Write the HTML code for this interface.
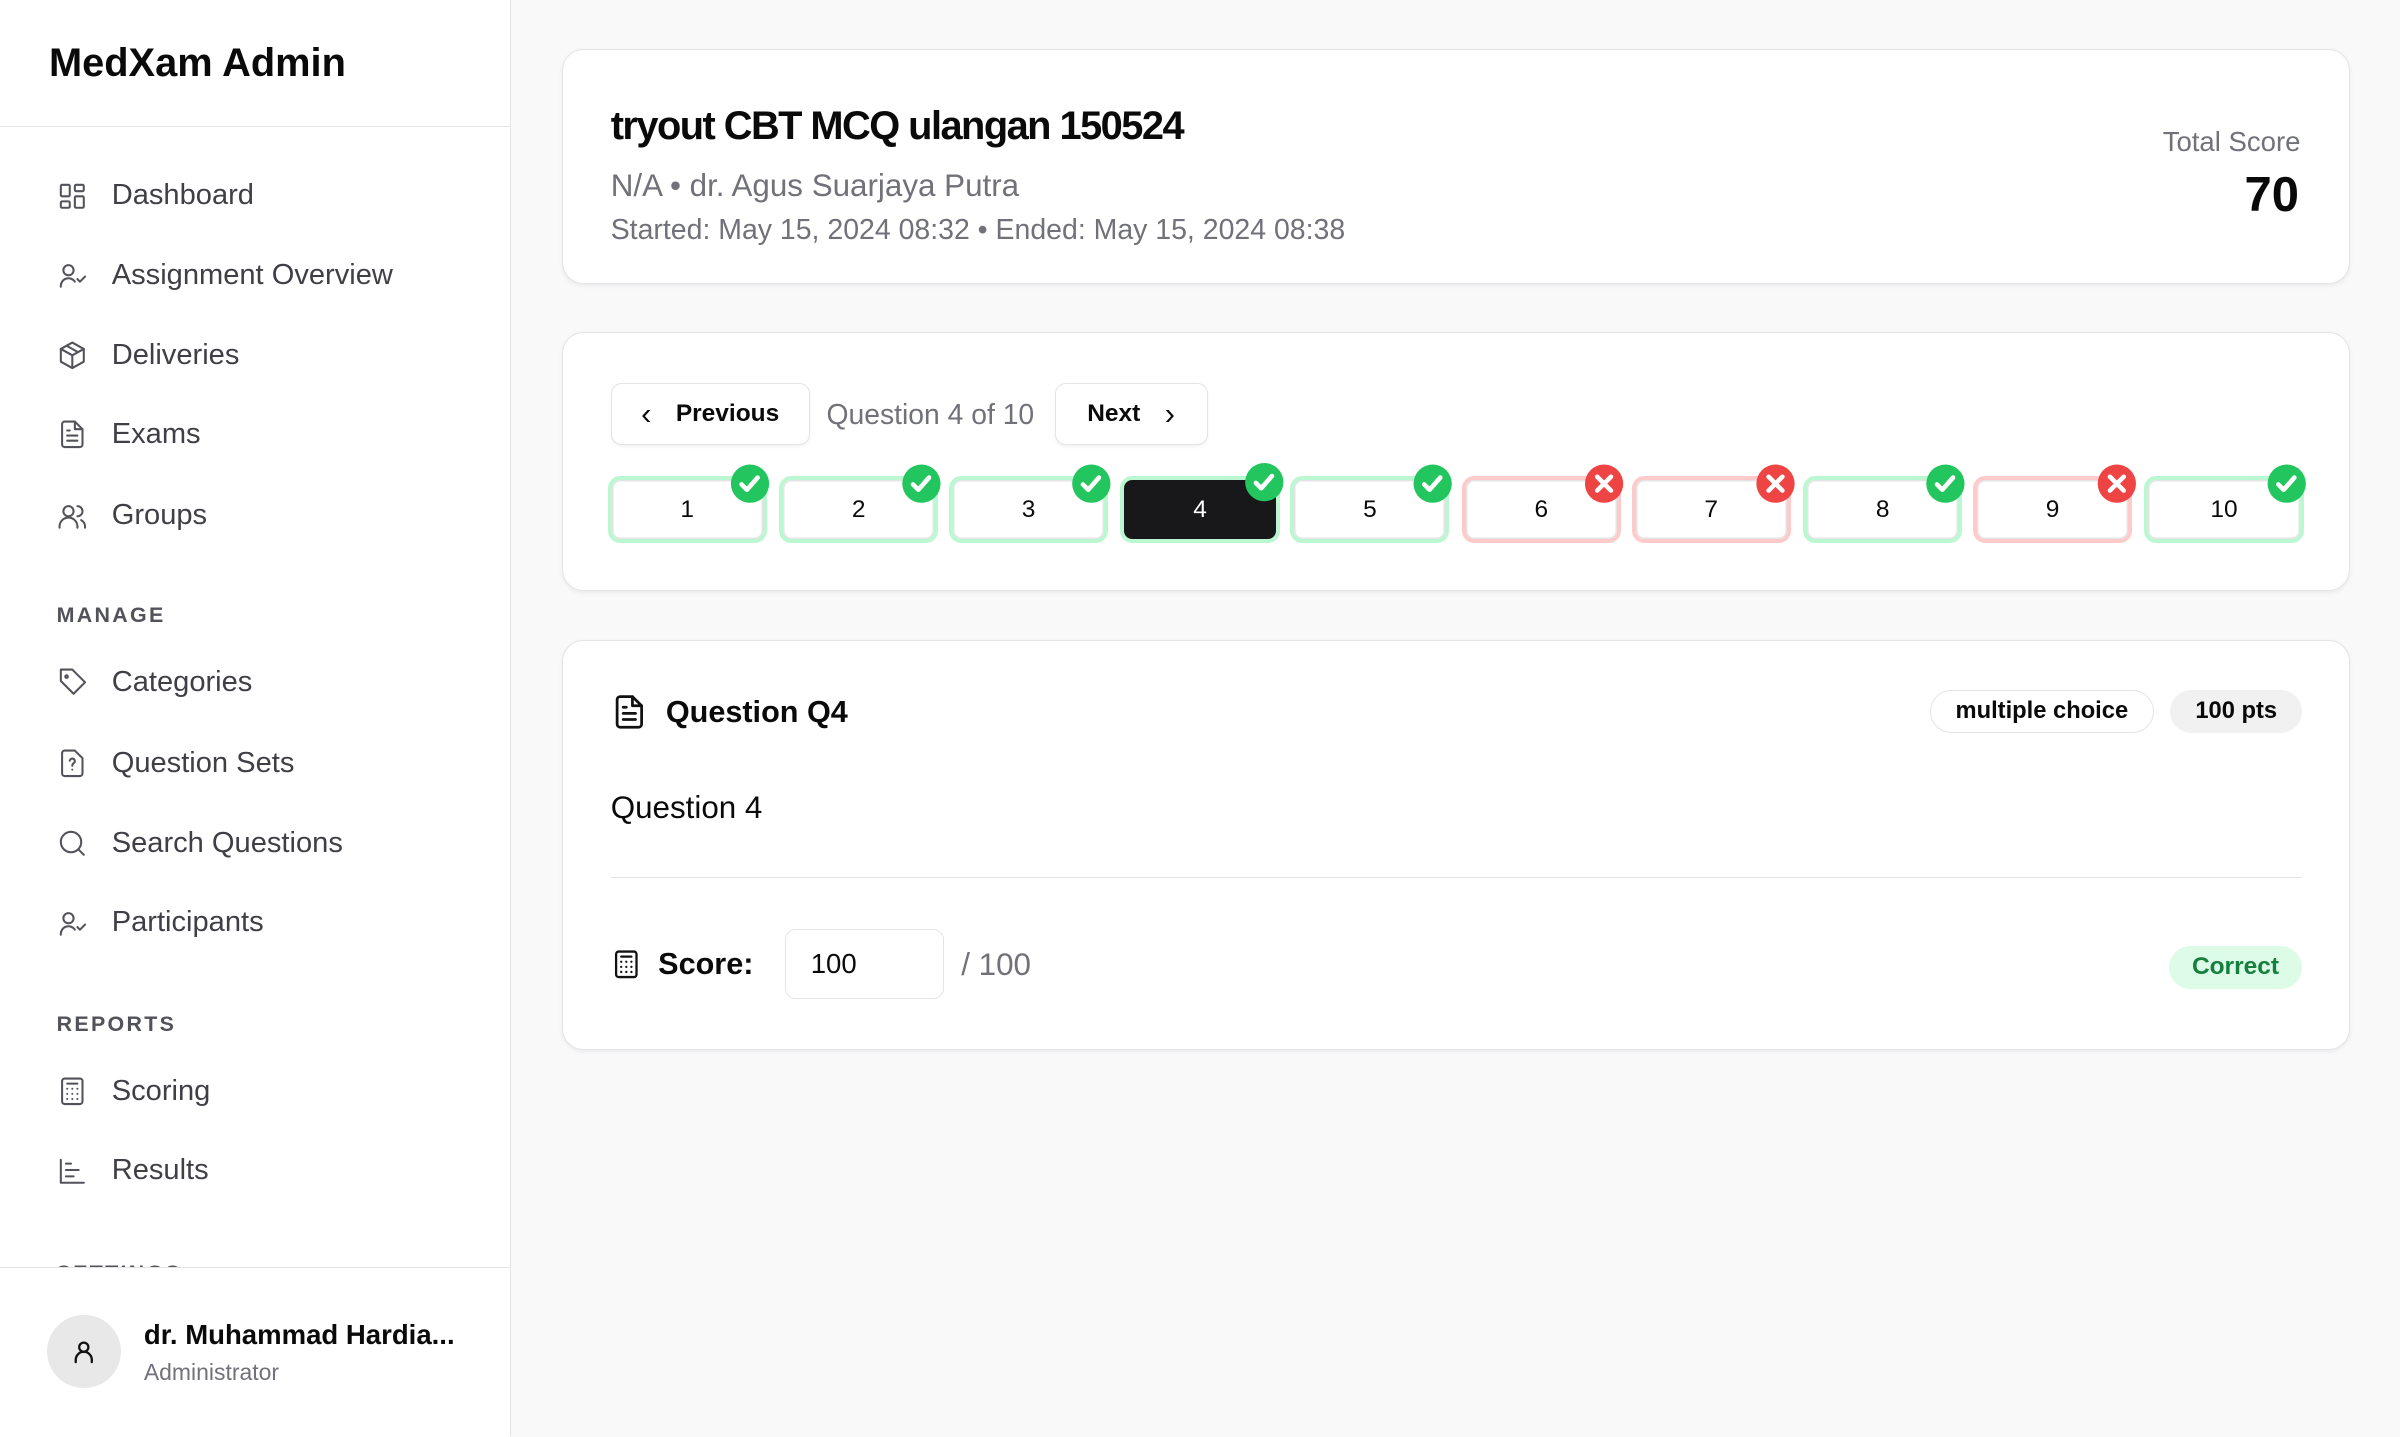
<!DOCTYPE html>
<html><head><meta charset="utf-8"><style>
html,body{margin:0;padding:0}
body{width:1568px;height:938px;zoom:1.530612;background:#f9f9fa;font-family:"Liberation Sans",sans-serif;color:#0a0a0a;position:relative;overflow:hidden}
.a{position:absolute}
.side{left:0;top:0;width:333px;height:938px;background:#fff;border-right:1px solid #e4e4e7}
.nav{left:37px;display:flex;align-items:center;font-size:19px;color:#3f3f46;height:24px;margin-top:-12px}
.nav svg{width:20px;height:20px;margin-right:16px;stroke:#52525b;fill:none;stroke-width:1.6;stroke-linecap:round;stroke-linejoin:round}
.sec{left:37px;font-size:14px;letter-spacing:1.5px;color:#52525b;font-weight:bold;margin-top:-8px}
.card{left:367px;width:1167px;background:#fff;border:1px solid #e4e4e7;border-radius:14px;box-shadow:0 1px 3px rgba(0,0,0,.06)}
.btn{border:1px solid #e4e4e7;border-radius:7px;background:#fff;display:flex;align-items:center;justify-content:center;font-size:16px;font-weight:bold;box-sizing:border-box;box-shadow:0 1px 2px rgba(0,0,0,.05)}
.t{top:311px;width:104px;height:44px;border:3px solid #bbf7d0;border-radius:8px;box-sizing:border-box;display:flex;align-items:center;justify-content:center;font-size:16px;background:#fff;box-shadow:inset 0 0 0 1px #e4e4e7}
.t.r{border-color:#fecaca}
</style></head><body>
<div class="a side"></div>
<div class="a" style="left:32px;top:27px;font-size:26px;font-weight:bold">MedXam Admin</div>
<div class="a" style="left:0;top:82px;width:333px;border-top:1px solid #e4e4e7"></div>

<div class="a nav" style="top:128px"><svg viewBox="0 0 24 24"><rect x="3" y="3" width="7" height="9" rx="1"/><rect x="14" y="3" width="7" height="5" rx="1"/><rect x="14" y="12" width="7" height="9" rx="1"/><rect x="3" y="16" width="7" height="5" rx="1"/></svg>Dashboard</div>
<div class="a nav" style="top:180px"><svg viewBox="0 0 24 24"><circle cx="9" cy="8" r="4"/><path d="M3 21v-1a6 6 0 0 1 11-3"/><path d="M16 15l2 2 4-4"/></svg>Assignment Overview</div>
<div class="a nav" style="top:232px"><svg viewBox="0 0 24 24"><path d="M12 2l9 5v10l-9 5-9-5V7z"/><path d="M3 7l9 5 9-5M12 12v10M7.5 4.5l9 5"/></svg>Deliveries</div>
<div class="a nav" style="top:284px"><svg viewBox="0 0 24 24"><path d="M14 2H6a2 2 0 0 0-2 2v16a2 2 0 0 0 2 2h12a2 2 0 0 0 2-2V8z"/><path d="M14 2v6h6M8 13h8M8 17h8M8 9h2"/></svg>Exams</div>
<div class="a nav" style="top:337px"><svg viewBox="0 0 24 24"><circle cx="9" cy="8" r="4"/><path d="M2 21v-1a7 7 0 0 1 14 0v1M16 4a4 4 0 0 1 0 8M19 15a6 6 0 0 1 3 5v1"/></svg>Groups</div>
<div class="a sec" style="top:402px">MANAGE</div>
<div class="a nav" style="top:446px"><svg viewBox="0 0 24 24"><path d="M12 2H3v9l10 10 9-9z"/><circle cx="7.5" cy="7.5" r="1"/></svg>Categories</div>
<div class="a nav" style="top:499px"><svg viewBox="0 0 24 24"><path d="M14 2H6a2 2 0 0 0-2 2v16a2 2 0 0 0 2 2h12a2 2 0 0 0 2-2V8z"/><path d="M10 10a2 2 0 1 1 3 2c-1 .5-1 1-1 2M12 17h0"/></svg>Question Sets</div>
<div class="a nav" style="top:551px"><svg viewBox="0 0 24 24"><circle cx="11" cy="11" r="8"/><path d="M21 21l-4.3-4.3"/></svg>Search Questions</div>
<div class="a nav" style="top:603px"><svg viewBox="0 0 24 24"><circle cx="9" cy="8" r="4"/><path d="M3 21v-1a6 6 0 0 1 11-3"/><path d="M16 15l2 2 4-4"/></svg>Participants</div>
<div class="a sec" style="top:669px">REPORTS</div>
<div class="a nav" style="top:713px"><svg viewBox="0 0 24 24"><rect x="4" y="2" width="16" height="20" rx="2"/><path d="M8 6h8M8 10h0M12 10h0M16 10h0M8 14h0M12 14h0M16 14h0M8 18h0M12 18h0M16 18h0"/></svg>Scoring</div>
<div class="a nav" style="top:765px"><svg viewBox="0 0 24 24"><path d="M3 3v18h18M7 16h6M7 11h10M7 6h4"/></svg>Results</div>
<div class="a sec" style="top:832px">SETTINGS</div>
<div class="a" style="left:0;top:828px;width:333px;height:110px;background:#fff;border-top:1px solid #e4e4e7"></div>
<div class="a" style="left:31px;top:859px;width:48px;height:48px;border-radius:50%;background:#e8e8e8;display:flex;align-items:center;justify-content:center"><svg width="18" height="18" viewBox="0 0 24 24" fill="none" stroke="#111" stroke-width="2" stroke-linecap="round"><circle cx="12" cy="8" r="4"/><path d="M5 21v-2a5 5 0 0 1 14 0v2"/></svg></div>
<div class="a" style="left:94px;top:862px;font-size:18px;font-weight:bold">dr. Muhammad Hardia...</div>
<div class="a" style="left:94px;top:888px;font-size:15px;color:#71717a">Administrator</div>

<div class="a card" style="top:32px;height:152px"></div>
<div class="a" style="left:399px;top:68px;font-size:26px;font-weight:bold;letter-spacing:-1px">tryout CBT MCQ ulangan 150524</div>
<div class="a" style="left:399px;top:110px;font-size:20.5px;color:#71717a">N/A • dr. Agus Suarjaya Putra</div>
<div class="a" style="left:399px;top:140px;font-size:18.6px;color:#71717a">Started: May 15, 2024 08:32 • Ended: May 15, 2024 08:38</div>
<div class="a" style="right:65px;top:82px;font-size:18px;color:#71717a">Total Score</div>
<div class="a" style="right:66px;top:109px;font-size:32px;font-weight:bold">70</div>

<div class="a card" style="top:217px;height:168px"></div>
<div class="a btn" style="left:399px;top:250px;width:130px;height:41px"><span style="margin-right:16px;font-size:20px;font-weight:normal">‹</span>Previous</div>
<div class="a" style="left:540px;top:260px;font-size:18.5px;color:#71717a">Question 4 of 10</div>
<div class="a btn" style="left:689px;top:250px;width:100px;height:41px">Next<span style="margin-left:16px;font-size:20px;font-weight:normal">›</span></div>

<div class="a t" style="left:397px">1</div>
<div class="a t" style="left:509px">2</div>
<div class="a t" style="left:620px">3</div>
<div class="a t" style="left:732px;background:#18181b;color:#fff;border-color:#bbf7d0;box-shadow:none">4</div>
<div class="a t" style="left:843px">5</div>
<div class="a t r" style="left:955px">6</div>
<div class="a t r" style="left:1066px">7</div>
<div class="a t" style="left:1178px">8</div>
<div class="a t r" style="left:1289px">9</div>
<div class="a t" style="left:1401px">10</div>
<svg class="a" style="left:0;top:0" width="1568" height="400">
<defs><g id="ok"><circle r="12.5" fill="#22c55e"/><path d="M-5.5 0.5l3.5 3.5 7-8" stroke="#fff" stroke-width="3" fill="none" stroke-linecap="round" stroke-linejoin="round"/></g>
<g id="no"><circle r="12.5" fill="#ef4444"/><path d="M-4.5-4.5l9 9M4.5-4.5l-9 9" stroke="#fff" stroke-width="3" stroke-linecap="round"/></g></defs>
<use href="#ok" x="490" y="316"/><use href="#ok" x="602" y="316"/><use href="#ok" x="713" y="316"/><use href="#ok" x="826" y="315"/><use href="#ok" x="936" y="316"/>
<use href="#no" x="1048" y="316"/><use href="#no" x="1160" y="316"/><use href="#ok" x="1271" y="316"/><use href="#no" x="1383" y="316"/><use href="#ok" x="1494" y="316"/>
</svg>

<div class="a card" style="top:418px;height:267px"></div>
<svg class="a" style="left:399px;top:452px" width="24" height="26" viewBox="0 0 24 24" fill="none" stroke="#111" stroke-width="1.8" stroke-linecap="round" stroke-linejoin="round"><path d="M14 2H6a2 2 0 0 0-2 2v16a2 2 0 0 0 2 2h12a2 2 0 0 0 2-2V8z"/><path d="M14 2v6h6M8 13h8M8 17h8M8 9h2"/></svg>
<div class="a" style="left:435px;top:454px;font-size:20px;font-weight:bold">Question Q4</div>
<div class="a" style="left:1261px;top:451px;width:146px;height:28px;box-sizing:border-box;border:1px solid #e4e4e7;border-radius:14px;font-size:15.5px;font-weight:bold;display:flex;align-items:center;justify-content:center">multiple choice</div>
<div class="a" style="left:1418px;top:451px;width:86px;height:28px;background:#f1f1f2;border-radius:14px;font-size:15.5px;font-weight:bold;display:flex;align-items:center;justify-content:center">100 pts</div>
<div class="a" style="left:399px;top:516px;font-size:20.5px">Question 4</div>
<div class="a" style="left:399px;top:573px;width:1105px;border-top:1px solid #e4e4e7"></div>
<svg class="a" style="left:399px;top:620px" width="20" height="20" viewBox="0 0 24 24" fill="none" stroke="#111" stroke-width="1.8" stroke-linecap="round"><rect x="4" y="2" width="16" height="20" rx="2"/><path d="M8 6h8M8 10h0M12 10h0M16 10h0M8 14h0M12 14h0M16 14h0M8 18h0M12 18h0M16 18h0"/></svg>
<div class="a" style="left:430px;top:619px;font-size:20px;font-weight:bold">Score:</div>
<div class="a" style="left:513px;top:607px;width:104px;height:46px;box-sizing:border-box;border:1px solid #e4e4e7;border-radius:7px;font-size:18px;padding:12px 0 0 16px;background:#fff">100</div>
<div class="a" style="left:628px;top:619px;font-size:20.5px;color:#71717a">/ 100</div>
<div class="a" style="left:1417px;top:618px;width:87px;height:28px;background:#dcfce7;border-radius:14px;color:#15803d;font-size:16px;font-weight:bold;display:flex;align-items:center;justify-content:center">Correct</div>
</body></html>
